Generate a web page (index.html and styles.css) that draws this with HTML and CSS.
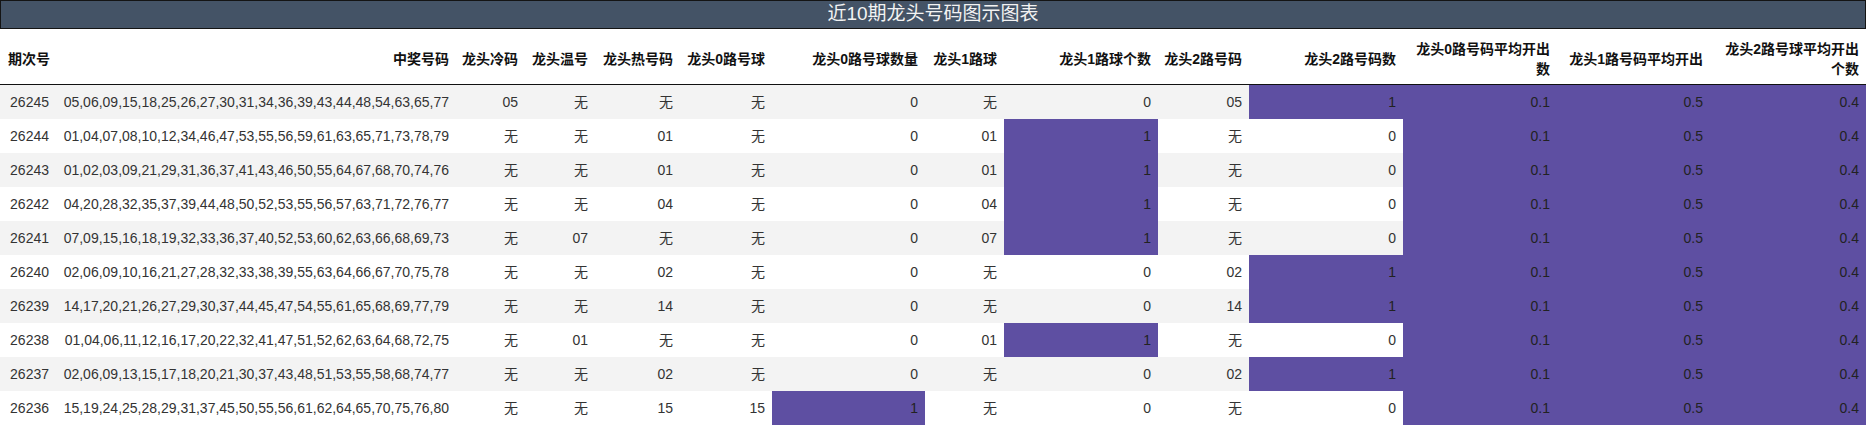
FILE: index.html
```html
<!DOCTYPE html>
<html lang="zh">
<head>
<meta charset="utf-8">
<title>近10期龙头号码图示图表</title>
<link rel="stylesheet" href="styles.css">
</head>
<body>
<div class="chart">
  <div class="title">近10期龙头号码图示图表</div>
  <table class="grid">
    <colgroup>
      <col class="w56"><col class="w400"><col class="w69"><col class="w70"><col class="w85"><col class="w92"><col class="w153"><col class="w79"><col class="w154"><col class="w91"><col class="w154"><col class="w154"><col class="w153"><col class="w156">
    </colgroup>
    <thead>
      <tr>
        <th class="first">期次号</th><th>中奖号码</th><th>龙头冷码</th><th>龙头温号</th><th>龙头热号码</th><th>龙头0路号球</th><th>龙头0路号球数量</th><th>龙头1路球</th><th>龙头1路球个数</th><th>龙头2路号码</th><th>龙头2路号码数</th><th class="wrap">龙头0路号码平均开出数</th><th class="wrap">龙头1路号码平均开出</th><th class="wrap">龙头2路号球平均开出个数</th>
      </tr>
    </thead>
    <tbody>
      <tr><td>26245</td><td>05,06,09,15,18,25,26,27,30,31,34,36,39,43,44,48,54,63,65,77</td><td>05</td><td>无</td><td>无</td><td>无</td><td>0</td><td>无</td><td>0</td><td>05</td><td class="hi">1</td><td class="hi">0.1</td><td class="hi">0.5</td><td class="hi">0.4</td></tr>
      <tr><td>26244</td><td>01,04,07,08,10,12,34,46,47,53,55,56,59,61,63,65,71,73,78,79</td><td>无</td><td>无</td><td>01</td><td>无</td><td>0</td><td>01</td><td class="hi">1</td><td>无</td><td>0</td><td class="hi">0.1</td><td class="hi">0.5</td><td class="hi">0.4</td></tr>
      <tr><td>26243</td><td>01,02,03,09,21,29,31,36,37,41,43,46,50,55,64,67,68,70,74,76</td><td>无</td><td>无</td><td>01</td><td>无</td><td>0</td><td>01</td><td class="hi">1</td><td>无</td><td>0</td><td class="hi">0.1</td><td class="hi">0.5</td><td class="hi">0.4</td></tr>
      <tr><td>26242</td><td>04,20,28,32,35,37,39,44,48,50,52,53,55,56,57,63,71,72,76,77</td><td>无</td><td>无</td><td>04</td><td>无</td><td>0</td><td>04</td><td class="hi">1</td><td>无</td><td>0</td><td class="hi">0.1</td><td class="hi">0.5</td><td class="hi">0.4</td></tr>
      <tr><td>26241</td><td>07,09,15,16,18,19,32,33,36,37,40,52,53,60,62,63,66,68,69,73</td><td>无</td><td>07</td><td>无</td><td>无</td><td>0</td><td>07</td><td class="hi">1</td><td>无</td><td>0</td><td class="hi">0.1</td><td class="hi">0.5</td><td class="hi">0.4</td></tr>
      <tr><td>26240</td><td>02,06,09,10,16,21,27,28,32,33,38,39,55,63,64,66,67,70,75,78</td><td>无</td><td>无</td><td>02</td><td>无</td><td>0</td><td>无</td><td>0</td><td>02</td><td class="hi">1</td><td class="hi">0.1</td><td class="hi">0.5</td><td class="hi">0.4</td></tr>
      <tr><td>26239</td><td>14,17,20,21,26,27,29,30,37,44,45,47,54,55,61,65,68,69,77,79</td><td>无</td><td>无</td><td>14</td><td>无</td><td>0</td><td>无</td><td>0</td><td>14</td><td class="hi">1</td><td class="hi">0.1</td><td class="hi">0.5</td><td class="hi">0.4</td></tr>
      <tr><td>26238</td><td>01,04,06,11,12,16,17,20,22,32,41,47,51,52,62,63,64,68,72,75</td><td>无</td><td>01</td><td>无</td><td>无</td><td>0</td><td>01</td><td class="hi">1</td><td>无</td><td>0</td><td class="hi">0.1</td><td class="hi">0.5</td><td class="hi">0.4</td></tr>
      <tr><td>26237</td><td>02,06,09,13,15,17,18,20,21,30,37,43,48,51,53,55,58,68,74,77</td><td>无</td><td>无</td><td>02</td><td>无</td><td>0</td><td>无</td><td>0</td><td>02</td><td class="hi">1</td><td class="hi">0.1</td><td class="hi">0.5</td><td class="hi">0.4</td></tr>
      <tr><td>26236</td><td>15,19,24,25,28,29,31,37,45,50,55,56,61,62,64,65,70,75,76,80</td><td>无</td><td>无</td><td>15</td><td>15</td><td class="hi">1</td><td>无</td><td>0</td><td>无</td><td>0</td><td class="hi">0.1</td><td class="hi">0.5</td><td class="hi">0.4</td></tr>
    </tbody>
  </table>
</div>
</body>
</html>
```
FILE: styles.css
```css
html, body {
  margin: 0;
  padding: 0;
  background: #ffffff;
}

.chart {
  width: 1866px;
  font-family: "Liberation Sans", Arial, "Noto Sans CJK SC", sans-serif;
  color: #333333;
}

.title {
  box-sizing: border-box;
  height: 29px;
  border: 1px solid #141414;
  background: #445366;
  color: #f2f2f2;
  font-size: 19px;
  line-height: 26px;
  text-align: center;
}

.grid {
  width: 1866px;
  table-layout: fixed;
  border-collapse: collapse;
  border-spacing: 0;
}

.w56 { width: 56px; }
.w400 { width: 400px; }
.w69 { width: 69px; }
.w70 { width: 70px; }
.w85 { width: 85px; }
.w92 { width: 92px; }
.w153 { width: 153px; }
.w79 { width: 79px; }
.w154 { width: 154px; }
.w91 { width: 91px; }
.w156 { width: 156px; }

.grid th {
  height: 51px;
  padding: 4px 7px 0 0;
  font-size: 14px;
  line-height: 20px;
  font-weight: bold;
  color: #111111;
  text-align: right;
  vertical-align: middle;
  white-space: nowrap;
  border-bottom: 1px solid #111111;
  background: #ffffff;
}

.grid th.wrap {
  white-space: normal;
  padding-left: 7px;
}

.grid th.first {
  text-align: left;
  padding-left: 8px;
  padding-right: 0;
}

.grid td {
  height: 34px;
  padding: 0 7px;
  font-size: 14px;
  line-height: 20px;
  text-align: right;
  vertical-align: middle;
  white-space: nowrap;
  overflow: hidden;
}

.grid tbody tr:nth-child(odd) td {
  background: #f3f3f3;
}

.grid tbody tr:nth-child(even) td {
  background: #ffffff;
}

.grid tbody tr td.hi {
  background: #5e4fa2;
  color: #222222;
}
```
